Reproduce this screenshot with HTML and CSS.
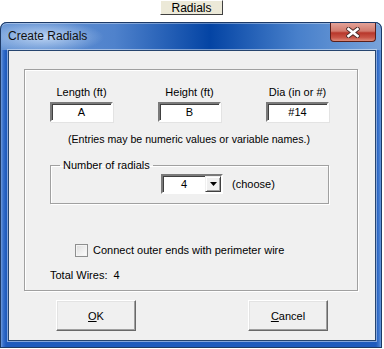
FILE: index.html
```html
<!DOCTYPE html>
<html lang="en">
<head>
  <meta charset="UTF-8" />
  <title>Create Radials</title>
  <link rel="stylesheet" href="styles.css">
</head>
<body>

  <div class="topbar">
    <button class="sheet-btn">Radials</button>
  </div>

  <div class="window">
    <div class="titlebar">
      <span class="title">Create Radials</span>
      <div class="close">
        <svg width="14" height="11" viewBox="0 0 14 11">
          <path d="M2.5 2 L11.5 9 M11.5 2 L2.5 9" stroke="#4a2a28" stroke-width="4.4" stroke-linecap="square" />
          <path d="M2.5 2 L11.5 9 M11.5 2 L2.5 9" stroke="#ffffff" stroke-width="2.6" stroke-linecap="square" />
        </svg>
      </div>
    </div>

    <div class="client">
      <div class="panel">
        <div class="fields">
          <div class="field"><label>Length (ft)</label><div class="box">A</div></div>
          <div class="field"><label>Height (ft)</label><div class="box">B</div></div>
          <div class="field"><label>Dia (in or #)</label><div class="box">#14</div></div>
        </div>

        <p class="note">(Entries may be numeric values or variable names.)</p>

        <fieldset class="group">
          <legend>Number of radials</legend>
          <div class="combo-row">
            <div class="combo">
              <span class="combo-val">4</span>
              <span class="combo-btn">
                <svg width="7" height="4" viewBox="0 0 7 4"><path d="M0 0 H7 L3.5 4 Z" fill="#000" /></svg>
              </span>
            </div>
            <span class="hint">(choose)</span>
          </div>
        </fieldset>

        <label class="check"><span class="checkbox"></span>Connect outer ends with perimeter wire</label>

        <div class="total">Total Wires:&nbsp; 4</div>
      </div>

      <div class="buttons">
        <button class="btn"><u>O</u>K</button>
        <button class="btn"><u>C</u>ancel</button>
      </div>
    </div>
  </div>

</body>
</html>
```

FILE: styles.css
```css
body { margin: 0; background: #fff; font-family: "Liberation Sans", Arial, sans-serif; font-size: 11px; color: #000; }

.topbar { height: 22px; }
.sheet-btn {
  display: block; margin-left: 160px; width: 63px; height: 15px; padding: 0;
  background: #ece9d8; font: 12px "Liberation Sans", Arial, sans-serif; color: #000;
  border: 1px solid; border-color: #fff #404040 #404040 #fff;
}

.window {
  width: 382px; height: 326px; box-sizing: border-box;
  padding: 0 6px 0 8px; border-radius: 7px 7px 0 0;
  background: linear-gradient(90deg, #8ab0e4 0, #3a72cc 3px, #1f5bbd 6px, #1f5bbd 376px, #3d76cc 379px, #7fa8e0 382px);
  box-shadow: inset 0 0 0 1px #1d3a66;
}

.titlebar {
  height: 28px; margin: 0 -6px 0 -8px; padding: 0 6px 0 8px;
  display: flex; align-items: flex-start;
  border-radius: 7px 7px 0 0;
  background:
    radial-gradient(ellipse 60px 16px at 44px 15px, rgba(210,228,250,0.8), rgba(210,228,250,0) 100%),
    linear-gradient(90deg, #6b98d6 0%, #4f82cc 30%, #0444a4 55%, #4880cb 78%, #79a3da 100%);
  box-shadow: inset 0 1px 0 #1d3a66, inset 1px 0 0 #1d3a66, inset -1px 0 0 #1d3a66, inset 0 2px 0 rgba(255,255,255,0.35);
}
.title { font-size: 12px; line-height: 28px; color: #111; }
.close {
  margin-left: auto; margin-top: 1px; width: 46px; height: 19px; box-sizing: border-box;
  display: flex; align-items: center; justify-content: center;
  border: 1px solid #5b1f1a; border-top: none; border-radius: 0 0 4px 4px;
  background: linear-gradient(180deg, #e3a298 0%, #d27a6d 45%, #b8372b 55%, #c85446 80%, #dc8a78 100%);
}

.client {
  width: 368px; height: 291px; box-sizing: border-box;
  background: #f0f0f0; border: 1px solid #26456f;
  box-shadow: 0 0 0 1px rgba(255,255,255,0.45);
  padding: 18px 0 0 15px;
}

.panel {
  width: 334px; height: 222px; box-sizing: border-box;
  border: 1px solid #a0a0a0;
  box-shadow: 1px 1px 0 #fff, inset 1px 1px 0 #fff;
}

.fields { display: flex; gap: 45px; padding: 16px 0 0 25px; }
.field { width: 63px; display: flex; flex-direction: column; align-items: center; }
.field label { line-height: 13px; margin-bottom: 3px; white-space: nowrap; }
.box {
  width: 63px; height: 20px; box-sizing: border-box; background: #fff;
  border: 2px solid; border-color: #7a7a7a #fff #fff #7a7a7a;
  box-shadow: inset 1px 1px 0 #404040, 1px 1px 0 #e3e3e3;
  text-align: center; line-height: 16px;
}

.note { margin: 11px 0 0; text-align: center; line-height: 13px; font-size: 10.6px; padding-right: 4px; }

.group {
  margin: 12px 0 0 25px; padding: 0 0 9px; width: 279px; box-sizing: border-box;
  border: 1px solid #a0a0a0; box-shadow: 1px 1px 0 #fff, inset 1px 1px 0 #fff;
}
.group legend { margin-left: 9px; padding: 0 3px; line-height: 14px; }
.combo-row { display: flex; align-items: center; gap: 9px; margin: 2px 0 0 110px; }
.combo {
  width: 62px; height: 20px; box-sizing: border-box; display: flex; background: #fff;
  border: 2px solid; border-color: #7a7a7a #fff #fff #7a7a7a;
  box-shadow: inset 1px 1px 0 #404040;
}
.combo-val { flex: 1; text-align: center; line-height: 16px; }
.combo-btn {
  width: 16px; height: 16px; box-sizing: border-box;
  display: flex; align-items: center; justify-content: center; background: #f0f0f0;
  border: 1px solid; border-color: #f0f0f0 #404040 #404040 #f0f0f0;
  box-shadow: inset 1px 1px 0 #fff, inset -1px -1px 0 #a0a0a0;
}

.check { display: flex; align-items: center; gap: 5px; margin: 40px 0 0 50px; line-height: 13px; }
.checkbox {
  width: 13px; height: 13px; box-sizing: border-box;
  border: 1px solid #8e8f8f; background: linear-gradient(135deg, #dcdcdc, #fff);
  box-shadow: inset 0 0 0 1px #f4f4f4;
}

.total { margin: 12px 0 0 25px; line-height: 13px; }

.buttons { display: flex; gap: 112px; margin: 9px 0 0 32px; }
.btn {
  width: 80px; height: 31px; padding: 0; box-sizing: border-box;
  font: 11px "Liberation Sans", Arial, sans-serif; color: #000; background: #f0f0f0;
  border: 1px solid; border-color: #fff #696969 #696969 #fff;
  box-shadow: inset -1px -1px 0 #a0a0a0, inset 1px 1px 0 #e3e3e3;
}
```
